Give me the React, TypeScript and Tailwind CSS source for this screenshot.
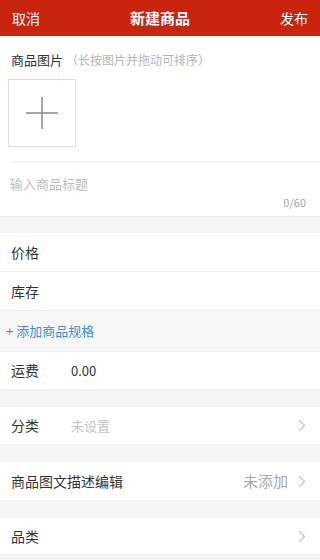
import React from 'react';

const font = { fontFamily: '"Noto Sans CJK SC", "Noto Sans", sans-serif' };

function Chevron() {
  return (
    <svg width="8" height="13" viewBox="0 0 8 13" fill="none" className="ml-[10px]">
      <path d="M1.5 1.5 L6.5 6.5 L1.5 11.5" stroke="#c4c4c4" strokeWidth="1.3" strokeLinecap="round" strokeLinejoin="round" />
    </svg>
  );
}

function Row({ label, value, valueClass, right, chevron, border, height = 'h-[38px]' }: {
  label: string;
  value?: string;
  valueClass?: string;
  right?: string;
  chevron?: boolean;
  border?: boolean;
  height?: string;
}) {
  return (
    <div className={`flex items-center bg-white pl-[11px] pr-[14px] ${height} ${border ? 'border-b border-[#eeeeee]' : ''}`}>
      <span className="w-[60px] shrink-0 whitespace-nowrap text-[14px] text-[#333333]">{label}</span>
      {value && <span className={`text-[13px] ${valueClass}`}>{value}</span>}
      <div className="flex-1" />
      {right && <span className="text-[15px] text-[#a8a8a8]">{right}</span>}
      {chevron && <Chevron />}
    </div>
  );
}

export default function App() {
  return (
    <div className="flex h-[560px] w-[320px] flex-col overflow-hidden bg-[#f5f5f5]" style={font}>
      {/* 顶部栏 */}
      <div className="flex h-[36px] shrink-0 items-center justify-between bg-[#c8240e] px-[12px] text-white">
        <span className="text-[14px]">取消</span>
        <span className="text-[15px] font-bold">新建商品</span>
        <span className="text-[14px]">发布</span>
      </div>

      {/* 商品图片 */}
      <div className="bg-white">
        <div className="mt-[14px] flex h-[20px] items-center pl-[11px]">
          <span className="text-[13px] text-[#333333]">商品图片</span>
          <span className="ml-[3px] text-[12px] text-[#b5b5b5]">（长按图片并拖动可排序）</span>
        </div>
        <div className="ml-[8px] mt-[9px] flex h-[68px] w-[68px] items-center justify-center border border-[#dddddd]">
          <svg width="34" height="34" viewBox="0 0 34 34">
            <path d="M17 1 V33 M1 17 H33" stroke="#8a8a8a" strokeWidth="1.5" />
          </svg>
        </div>
        <div className="ml-[11px] mt-[14px] border-b border-[#eeeeee]" />
        <div className="px-[10px] pb-[6px] pt-[12px]">
          <div className="text-[13px] leading-[20px] text-[#bdbdbd]">输入商品标题</div>
          <div className="pr-[4px] text-right text-[11px] leading-[16px] text-[#a5a5a5]">0/60</div>
        </div>
        <div className="border-b border-[#eeeeee]" />
      </div>

      <div className="h-[16px] shrink-0" />

      <Row label="价格" border height="h-[39px]" />
      <Row label="库存" />

      <div className="flex h-[42px] shrink-0 items-center border-y border-[#efefef] bg-[#f7f7f7] pl-[6px]">
        <span className="text-[13px] text-[#3b8ee3]">+ 添加商品规格</span>
      </div>

      <Row label="运费" value="0.00" valueClass="text-[#333333]" border />

      <div className="h-[17px] shrink-0" />
      <Row label="分类" value="未设置" valueClass="text-[#c4c4c4]" chevron height="h-[37px]" />

      <div className="h-[18px] shrink-0" />
      <Row label="商品图文描述编辑" right="未添加" chevron />

      <div className="h-[18px] shrink-0" />
      <Row label="品类" chevron height="h-[37px]" border />
    </div>
  );
}
